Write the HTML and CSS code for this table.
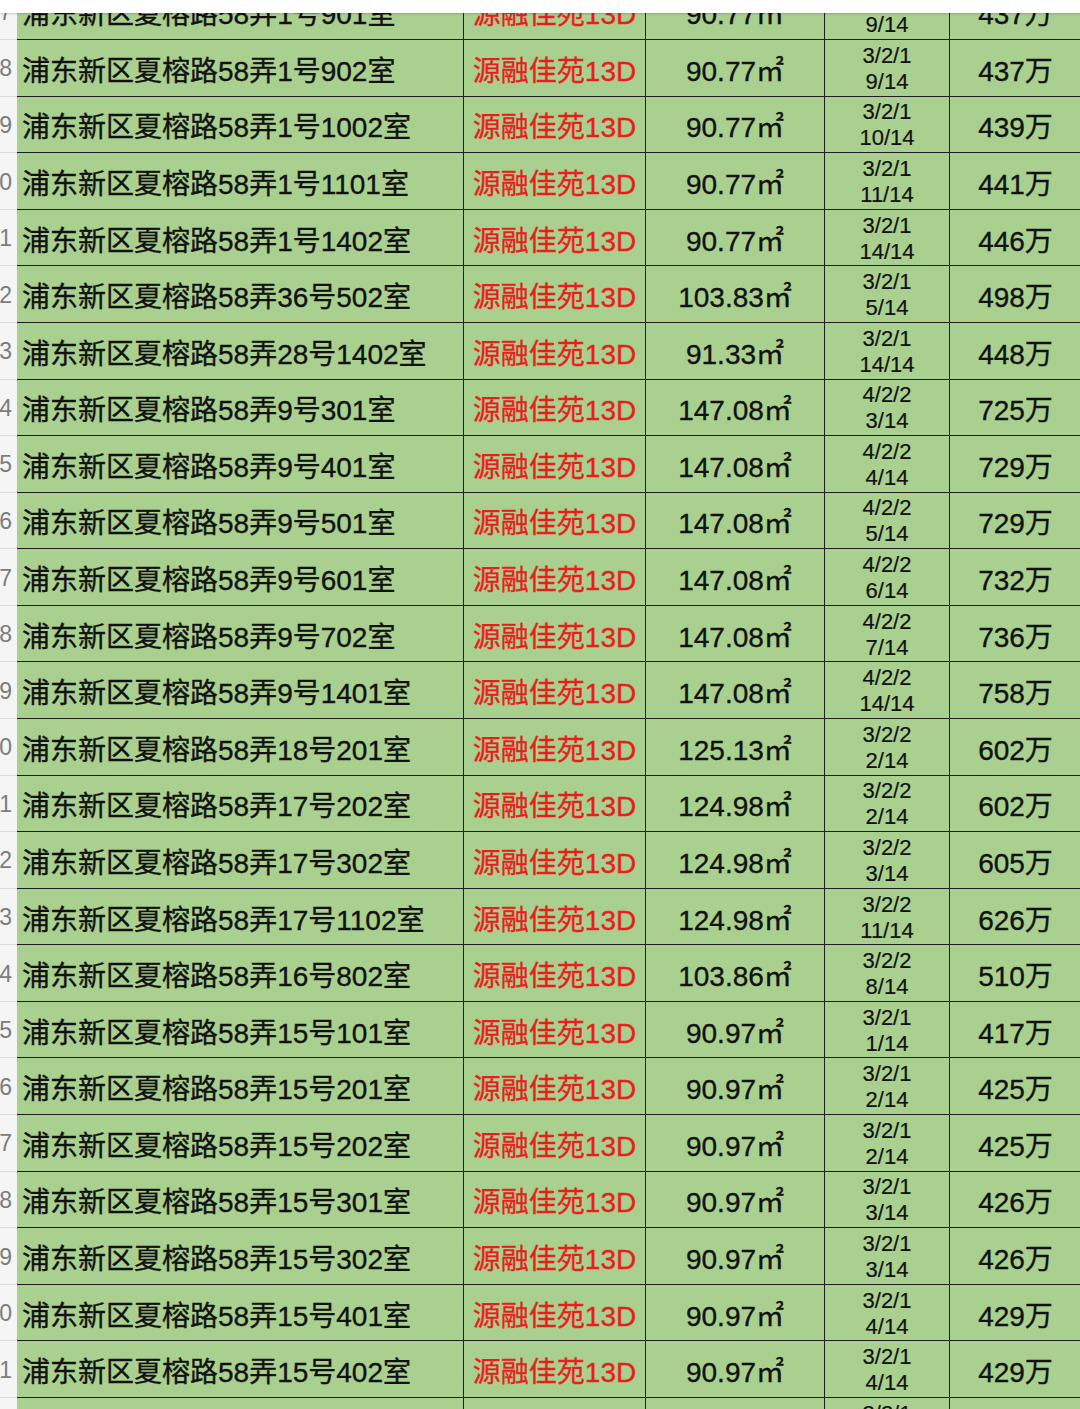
FILE: index.html
```html
<!DOCTYPE html>
<html lang="zh-CN">
<head>
<meta charset="utf-8">
<title>源融佳苑13D</title>
<link rel="stylesheet" href="styles.css">
</head>
<body>
<div class="frozen"></div>
<div class="sheet">
  <div class="rh">17</div><div class="c addr">浦东新区夏榕路58弄1号901室</div><div class="c name">源融佳苑13D</div><div class="c area">90.77㎡</div><div class="c lay"><span>3/2/1</span><span>9/14</span></div><div class="c price">437万</div>
  <div class="rh">18</div><div class="c addr">浦东新区夏榕路58弄1号902室</div><div class="c name">源融佳苑13D</div><div class="c area">90.77㎡</div><div class="c lay"><span>3/2/1</span><span>9/14</span></div><div class="c price">437万</div>
  <div class="rh">19</div><div class="c addr">浦东新区夏榕路58弄1号1002室</div><div class="c name">源融佳苑13D</div><div class="c area">90.77㎡</div><div class="c lay"><span>3/2/1</span><span>10/14</span></div><div class="c price">439万</div>
  <div class="rh">20</div><div class="c addr">浦东新区夏榕路58弄1号1101室</div><div class="c name">源融佳苑13D</div><div class="c area">90.77㎡</div><div class="c lay"><span>3/2/1</span><span>11/14</span></div><div class="c price">441万</div>
  <div class="rh">21</div><div class="c addr">浦东新区夏榕路58弄1号1402室</div><div class="c name">源融佳苑13D</div><div class="c area">90.77㎡</div><div class="c lay"><span>3/2/1</span><span>14/14</span></div><div class="c price">446万</div>
  <div class="rh">22</div><div class="c addr">浦东新区夏榕路58弄36号502室</div><div class="c name">源融佳苑13D</div><div class="c area">103.83㎡</div><div class="c lay"><span>3/2/1</span><span>5/14</span></div><div class="c price">498万</div>
  <div class="rh">23</div><div class="c addr">浦东新区夏榕路58弄28号1402室</div><div class="c name">源融佳苑13D</div><div class="c area">91.33㎡</div><div class="c lay"><span>3/2/1</span><span>14/14</span></div><div class="c price">448万</div>
  <div class="rh">24</div><div class="c addr">浦东新区夏榕路58弄9号301室</div><div class="c name">源融佳苑13D</div><div class="c area">147.08㎡</div><div class="c lay"><span>4/2/2</span><span>3/14</span></div><div class="c price">725万</div>
  <div class="rh">25</div><div class="c addr">浦东新区夏榕路58弄9号401室</div><div class="c name">源融佳苑13D</div><div class="c area">147.08㎡</div><div class="c lay"><span>4/2/2</span><span>4/14</span></div><div class="c price">729万</div>
  <div class="rh">26</div><div class="c addr">浦东新区夏榕路58弄9号501室</div><div class="c name">源融佳苑13D</div><div class="c area">147.08㎡</div><div class="c lay"><span>4/2/2</span><span>5/14</span></div><div class="c price">729万</div>
  <div class="rh">27</div><div class="c addr">浦东新区夏榕路58弄9号601室</div><div class="c name">源融佳苑13D</div><div class="c area">147.08㎡</div><div class="c lay"><span>4/2/2</span><span>6/14</span></div><div class="c price">732万</div>
  <div class="rh">28</div><div class="c addr">浦东新区夏榕路58弄9号702室</div><div class="c name">源融佳苑13D</div><div class="c area">147.08㎡</div><div class="c lay"><span>4/2/2</span><span>7/14</span></div><div class="c price">736万</div>
  <div class="rh">29</div><div class="c addr">浦东新区夏榕路58弄9号1401室</div><div class="c name">源融佳苑13D</div><div class="c area">147.08㎡</div><div class="c lay"><span>4/2/2</span><span>14/14</span></div><div class="c price">758万</div>
  <div class="rh">30</div><div class="c addr">浦东新区夏榕路58弄18号201室</div><div class="c name">源融佳苑13D</div><div class="c area">125.13㎡</div><div class="c lay"><span>3/2/2</span><span>2/14</span></div><div class="c price">602万</div>
  <div class="rh">31</div><div class="c addr">浦东新区夏榕路58弄17号202室</div><div class="c name">源融佳苑13D</div><div class="c area">124.98㎡</div><div class="c lay"><span>3/2/2</span><span>2/14</span></div><div class="c price">602万</div>
  <div class="rh">32</div><div class="c addr">浦东新区夏榕路58弄17号302室</div><div class="c name">源融佳苑13D</div><div class="c area">124.98㎡</div><div class="c lay"><span>3/2/2</span><span>3/14</span></div><div class="c price">605万</div>
  <div class="rh">33</div><div class="c addr">浦东新区夏榕路58弄17号1102室</div><div class="c name">源融佳苑13D</div><div class="c area">124.98㎡</div><div class="c lay"><span>3/2/2</span><span>11/14</span></div><div class="c price">626万</div>
  <div class="rh">34</div><div class="c addr">浦东新区夏榕路58弄16号802室</div><div class="c name">源融佳苑13D</div><div class="c area">103.86㎡</div><div class="c lay"><span>3/2/2</span><span>8/14</span></div><div class="c price">510万</div>
  <div class="rh">35</div><div class="c addr">浦东新区夏榕路58弄15号101室</div><div class="c name">源融佳苑13D</div><div class="c area">90.97㎡</div><div class="c lay"><span>3/2/1</span><span>1/14</span></div><div class="c price">417万</div>
  <div class="rh">36</div><div class="c addr">浦东新区夏榕路58弄15号201室</div><div class="c name">源融佳苑13D</div><div class="c area">90.97㎡</div><div class="c lay"><span>3/2/1</span><span>2/14</span></div><div class="c price">425万</div>
  <div class="rh">37</div><div class="c addr">浦东新区夏榕路58弄15号202室</div><div class="c name">源融佳苑13D</div><div class="c area">90.97㎡</div><div class="c lay"><span>3/2/1</span><span>2/14</span></div><div class="c price">425万</div>
  <div class="rh">38</div><div class="c addr">浦东新区夏榕路58弄15号301室</div><div class="c name">源融佳苑13D</div><div class="c area">90.97㎡</div><div class="c lay"><span>3/2/1</span><span>3/14</span></div><div class="c price">426万</div>
  <div class="rh">39</div><div class="c addr">浦东新区夏榕路58弄15号302室</div><div class="c name">源融佳苑13D</div><div class="c area">90.97㎡</div><div class="c lay"><span>3/2/1</span><span>3/14</span></div><div class="c price">426万</div>
  <div class="rh">40</div><div class="c addr">浦东新区夏榕路58弄15号401室</div><div class="c name">源融佳苑13D</div><div class="c area">90.97㎡</div><div class="c lay"><span>3/2/1</span><span>4/14</span></div><div class="c price">429万</div>
  <div class="rh">41</div><div class="c addr">浦东新区夏榕路58弄15号402室</div><div class="c name">源融佳苑13D</div><div class="c area">90.97㎡</div><div class="c lay"><span>3/2/1</span><span>4/14</span></div><div class="c price">429万</div>
  <div class="rh">42</div><div class="c addr">浦东新区夏榕路58弄15号501室</div><div class="c name">源融佳苑13D</div><div class="c area">90.97㎡</div><div class="c lay"><span>3/2/1</span><span>5/14</span></div><div class="c price">431万</div>
</div>
</body>
</html>
```

FILE: styles.css
```css
html, body {
  margin: 0;
  padding: 0;
  background: #ffffff;
  overflow: hidden;
  width: 1080px;
  height: 1409px;
}

body {
  font-family: "Liberation Sans", "Noto Sans CJK SC", sans-serif;
  color: #111111;
}

.frozen {
  position: fixed;
  top: 0;
  left: 0;
  width: 1080px;
  height: 13px;
  background: #ffffff;
  box-shadow: 0 1px 2px rgba(0, 0, 0, 0.18);
  z-index: 2;
}

.sheet {
  display: grid;
  grid-template-columns: 17px 447px 182px 179px 125px 140px;
  grid-auto-rows: 56.58px;
  margin-top: -16.5px;
  width: 1090px;
}

.rh {
  display: flex;
  align-items: center;
  justify-content: flex-end;
  padding-right: 5px;
  padding-top: 2px;
  overflow: hidden;
  white-space: nowrap;
  background: #f5f5f5;
  border-bottom: 1px solid #dcdcdc;
  color: #7c7c7c;
  font-size: 23px;
}

.c {
  display: flex;
  align-items: center;
  justify-content: center;
  padding-top: 2px;
  background: #a9d08e;
  border-right: 1px solid #1e1e1e;
  border-bottom: 1px solid #1e1e1e;
  white-space: nowrap;
  overflow: hidden;
  -webkit-text-stroke: 0.35px currentColor;
}

.addr {
  justify-content: flex-start;
  padding-left: 5px;
  font-size: 28px;
}

.name {
  color: #ea1d1d;
  font-size: 28px;
}

.area {
  font-size: 28px;
}

.lay {
  flex-direction: column;
  font-size: 22px;
  line-height: 26px;
  -webkit-text-stroke: 0.2px currentColor;
}

.price {
  font-size: 28px;
  padding-right: 8px;
}
```
